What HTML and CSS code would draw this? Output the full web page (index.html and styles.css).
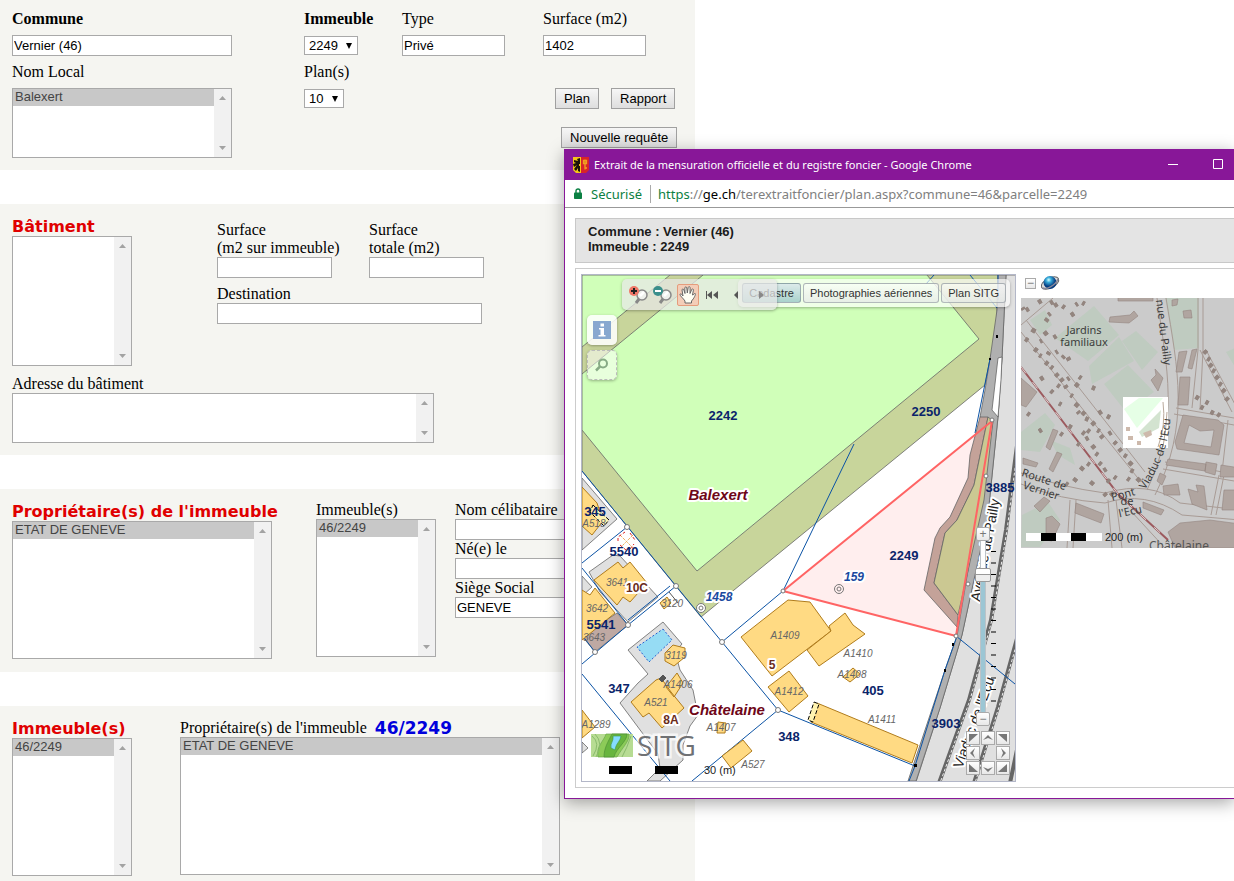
FILE: index.html
```html
<!DOCTYPE html>
<html lang="fr">
<head>
<meta charset="utf-8">
<title>Registre foncier</title>
<link rel="stylesheet" href="styles.css">
</head>
<body>
<svg class="defs" aria-hidden="true">
  <symbol id="scroll" viewBox="0 0 17 11"><path d="M5 8h7L8.500 4z" fill="#a3a3a3"/></symbol>
  <symbol id="caret" viewBox="0 0 8 8"><path d="M1 1h6L4 7z" fill="#000"/></symbol>
</svg>
<main class="form">
  <section class="panel panel-parcel">
    <div class="field">
      <label class="strong" for="commune">Commune</label>
      <input id="commune" type="text" value="Vernier (46)">
    </div>
    <div class="field">
      <label class="strong" for="immeuble">Immeuble</label>
      <span class="drop"><select id="immeuble"><option>2249</option></select><svg><use href="#caret"/></svg></span>
    </div>
    <div class="field">
      <label for="type">Type</label>
      <input id="type" class="w-small" type="text" value="Privé">
    </div>
    <div class="field">
      <label for="surface">Surface (m2)</label>
      <input id="surface" class="w-small" type="text" value="1402">
    </div>
    <div class="field">
      <label for="nomlocal">Nom Local</label>
      <span class="list list-short"><select id="nomlocal" multiple size="4"><option selected>Balexert</option></select><span class="bar"><svg><use href="#scroll"/></svg><svg class="down"><use href="#scroll"/></svg></span></span>
    </div>
    <div class="field">
      <label for="plans">Plan(s)</label>
      <span class="drop"><select id="plans"><option>10</option></select><svg><use href="#caret"/></svg></span>
    </div>
    <div class="actions">
      <div class="pair"><button type="button">Plan</button><button type="button">Rapport</button></div>
      <button type="button">Nouvelle requête</button>
    </div>
  </section>

  <section class="panel panel-building">
    <div class="building-top">
      <div class="titled w-list">
        <h2><label for="batiment">Bâtiment</label></h2>
        <span class="list list-medium"><select id="batiment" multiple size="7"></select><span class="bar"><svg><use href="#scroll"/></svg><svg class="down"><use href="#scroll"/></svg></span></span>
      </div>
      <div class="building-fields">
        <div class="stack"><label for="surfimm">Surface<br>(m2 sur immeuble)</label><input id="surfimm" type="text"></div>
        <div class="stack"><label for="surftot">Surface<br>totale (m2)</label><input id="surftot" type="text"></div>
        <div class="stack wide"><label for="destination">Destination</label><input id="destination" type="text"></div>
      </div>
    </div>
    <div class="stack address">
      <label for="adresse">Adresse du bâtiment</label>
      <span class="list list-address"><textarea id="adresse"></textarea><span class="bar"><svg><use href="#scroll"/></svg><svg class="down"><use href="#scroll"/></svg></span></span>
    </div>
  </section>

  <section class="panel panel-owner">
    <div class="titled">
      <h2><label for="proprio">Propriétaire(s) de l'immeuble</label></h2>
      <span class="list list-tall"><select id="proprio" multiple size="8"><option selected>ETAT DE GENEVE</option></select><span class="bar"><svg><use href="#scroll"/></svg><svg class="down"><use href="#scroll"/></svg></span></span>
    </div>
    <div class="stack w-list">
      <label for="imm2">Immeuble(s)</label>
      <span class="list list-tall"><select id="imm2" multiple size="8"><option selected>46/2249</option></select><span class="bar"><svg><use href="#scroll"/></svg><svg class="down"><use href="#scroll"/></svg></span></span>
    </div>
    <div class="stack">
      <label for="nom">Nom célibataire</label><input id="nom" type="text">
      <label for="ne">Né(e) le</label><input id="ne" type="text">
      <label for="siege">Siège Social</label><input id="siege" type="text" value="GENEVE">
    </div>
  </section>

  <section class="panel panel-estate">
    <div class="titled w-list">
      <h2><label for="imm3">Immeuble(s)</label></h2>
      <span class="list list-tall"><select id="imm3" multiple size="8"><option selected>46/2249</option></select><span class="bar"><svg><use href="#scroll"/></svg><svg class="down"><use href="#scroll"/></svg></span></span>
    </div>
    <div class="stack">
      <div class="legend"><label for="prop2">Propriétaire(s) de l'immeuble</label><strong>46/2249</strong></div>
      <span class="list list-tall"><select id="prop2" multiple size="8"><option selected>ETAT DE GENEVE</option></select><span class="bar"><svg><use href="#scroll"/></svg><svg class="down"><use href="#scroll"/></svg></span></span>
    </div>
  </section>
</main>

<aside class="window">
  <header class="titlebar">
    <svg class="crest" viewBox="0 0 16 16"><path fill="#f5c518" d="M0 0h8v16H3L0 13z"/><path fill="#d8232a" d="M8 0h8v13l-3 3H8z"/><path fill="#1b1408" d="M7 1 4 2 5 4 1 3v2l2 1-3 1 1 3 3-2-3 4 2 2 2-3v3l2 1V9H6V7h1z"/><path d="M12 2.500v10M10.500 3.500h3v3h-3zM12 11h2" fill="none" stroke="#f0a020" stroke-width="1.300"/></svg>
    <h1>Extrait de la mensuration officielle et du registre foncier - Google Chrome</h1>
    <button type="button" aria-label="Réduire"><svg viewBox="0 0 11 11"><path d="M0 5.500h10" stroke="#fff"/></svg></button>
    <button type="button" aria-label="Agrandir"><svg viewBox="0 0 11 11"><path d="M.5.500h9v9h-9z" fill="none" stroke="#fff"/></svg></button>
  </header>
  <div class="address-bar">
    <svg class="lock" viewBox="0 0 8 11"><path d="M2 5V3a2 2 0 0 1 4 0v2" fill="none" stroke="#0b8043" stroke-width="1.400"/><rect y="4.500" width="8" height="6.500" rx=".8" fill="#0b8043"/></svg>
    <span class="secure">Sécurisé</span>
    <span class="url"><span class="scheme">https</span>://<b>ge.ch</b>/terextraitfoncier/plan.aspx?commune=46&amp;parcelle=2249</span>
  </div>
  <div class="page">
    <p class="summary">Commune : Vernier (46)<br>Immeuble : 2249</p>
    <div class="viewer">
      <div class="map">
        <svg class="map-art" viewBox="582 275 433 506">
          <rect x="582" y="275" width="433" height="506" fill="#fff"/>
          <g stroke="#666" stroke-width=".8">
            <path fill="#c8d59b" d="M582 275H998L997 309 996 337 990 359 985 385 701 617 582 471z"/>
            <path fill="#d0ffb9" d="M582 275H927L979 339 697 571 582 430z"/>
            <path fill="#c8d59b" d="M670 275H703L582 374V347z"/>
            <path fill="#e0e0e0" d="M1006 275H1016V782H916L940 708 962 635 988 515 998 417 1002 358z"/>
            <path fill="#b0b0b0" d="M998 275H1006L1002 358 998 417 988 515 962 635 940 708 916 781H908L945 670 957 636 993 421 980 417 985 390 990 359 997 310z"/>
            <path fill="#fff" d="M998 358 1002 357 1001 380 998 417 992 410z"/>
            <path fill="#e0e0e0" d="M628 650 663 622 682 644 675 652 680 670 693 690 698 715 690 726 683 745V760L660 781H647L660 768 658 754 620 703 638 683 648 674zM589 572 613 555 620 556 658 597 628 622 600 592zM582 478 617 519 582 550zM582 742 588 748 582 753zM582 576 592 587 582 596z"/>
            <path fill="#bfa9a3" d="M617 613 628 625 595 652 582 636z"/>
          </g>
          <g fill="none" stroke="#666" stroke-width="4"><path d="M1018 438 1006 530 991 620 969 700 939 783M1018 635 998 707 974 783M1018 745 1010 783"/></g>
          <g fill="none" stroke="#eee" stroke-dasharray="3 2"><path d="M1019 438 1007 530 992 620 970 700 940 783M1019 635 999 707 975 783"/></g>
          <g fill="none" stroke="#0b53a5" stroke-width="1">
            <path d="M582 471 627 526 676 586 722 642 778 710 692 781M778 710 915 766M722 642 783 591 854 444M676 586 628 625 582 664M670 586 628 620M627 527 582 563M582 568 628 625M582 635 595 652M582 674 670 781M990 359 975 433M957 636 945 670 915 766 909 781M956 636 1015 684M970 275 997 308M998 275V300M934 275 926 284"/>
          </g>
          <g fill="#ffda83" stroke="#b07c1c">
            <path d="M741 637 788 600 810 602 831 631 772 676z"/>
            <path d="M845 613 853 625 865 634 819 666 807 650 831 631 829 626z"/>
            <path d="M789 671 808 696 789 712 768 687zM843 677 853 668 860 674 850 682zM817 703 918 745 912 763 811 722z"/>
            <path d="M743 740 752 751 731 768 722 756zM718 722 726 723 725 733 717 733z"/>
            <path d="M656 680 661 678 671 692 684 708 662 728 649 713 643 717 631 702zM677 673 683 683 674 697 666 687z"/>
            <path d="M665 653 673 645 685 648 685 657 674 666 665 661z"/>
            <path d="M630 562 647 583 630 602 623 597 617 605 594 580 618 562 623 568zM582 590 590 595 595 588 615 613 582 640z"/>
            <path d="M582 487 597 503 603 521 592 535 582 526zM582 710 595 727 582 738zM660 603 667 597 671 603 664 609z"/>
          </g>
          <path d="M593 505 609 520 604 526 590 512zM814 702 819 704 813 722 808 720z" fill="#fff3b0" stroke="#000" stroke-dasharray="4 2"/>
          <path d="M663 629 672 640 649 662 637 647z" fill="#96dcf4" stroke="#2860d0" stroke-dasharray="2 2"/>
          <path d="M620 535 634 549M633 535 620 548" stroke="#f0b060" stroke-dasharray="3 1"/>
          <path d="M618 541V537L625 532M630 533 635 540M620 545 626 550M630 549 634 544" fill="none" stroke="#d22" stroke-dasharray="3 2"/>
          <path d="M669 592 678 603M659 679 663 675 666 678 662 682z" stroke="#555" fill="#555"/>
          <path d="M992 421 783 591 956 636z" fill="#ff6060" fill-opacity=".11"/>
          <g stroke="#666" stroke-width=".8">
            <path fill="#c4a299" d="M980 417H988L977 470 974 485 957 520 945 533 934 583 958 615 957 627 924 590 935 538 940 528 950 517 968 478 970 455z"/>
            <path fill="#cbc892" d="M988 417 993 421 984 500 958 615 934 583 945 533 957 520 974 485z"/>
          </g>
          <path d="M992 421 783 591 956 636z" fill="none" stroke="#ff6464" stroke-width="2"/>
          <g fill="#fff" stroke="#777">
            <circle cx="627" cy="527" r="2.500"/><circle cx="676" cy="586" r="2.500"/><circle cx="628" cy="625" r="2.500"/><circle cx="595" cy="652" r="2.500"/><circle cx="722" cy="642" r="2.500"/><circle cx="778" cy="710" r="2.500"/><circle cx="783" cy="591" r="2"/><circle cx="992" cy="420" r="2"/><circle cx="986" cy="476" r="2"/><circle cx="968" cy="584" r="2"/><circle cx="956" cy="636" r="2"/>
            <circle cx="701" cy="608" r="4.500"/><circle cx="701" cy="608" r="2"/><circle cx="839" cy="589" r="4.500" fill="none"/><circle cx="839" cy="589" r="2" fill="none"/>
          </g>
          <path d="M996 335h2v3h-2zM989 358h2v2h-2zM944 669h2v3h-2zM952 643h2v3h-2zM914 764h3v3h-3z"/>
          <g class="street">
            <text transform="translate(980 602) rotate(-79)">Avenue du Pailly</text>
            <text transform="translate(962 769) rotate(-70)">Viaduc de l'Ecu</text>
          </g>
          <g class="building-no">
            <text x="785" y="639">A1409</text><text x="858" y="657">A1410</text><text x="852" y="678">A1408</text><text x="789" y="695">A1412</text><text x="882" y="723">A1411</text><text x="753" y="768">A527</text><text x="721" y="731">A1407</text><text x="656" y="706">A521</text><text x="678" y="688">A1406</text><text x="676" y="659">3119</text><text x="672" y="607">3120</text><text x="617" y="586">3641</text><text x="597" y="612">3642</text><text x="594" y="641">3643</text><text x="594" y="527">A518</text><text x="596" y="728">A1289</text>
          </g>
          <g class="parcel">
            <text x="723" y="420">2242</text><text x="926" y="416">2250</text><text x="904" y="560">2249</text><text x="1000" y="492">3885</text><text x="595" y="516">345</text><text x="624" y="556">5540</text><text x="601" y="629">5541</text><text x="619" y="693">347</text><text x="873" y="695">405</text><text x="789" y="741">348</text><text x="946" y="728">3903</text>
          </g>
          <g class="number"><text x="637" y="592">10C</text><text x="772" y="669">5</text><text x="671" y="724">8A</text></g>
          <g class="point"><text x="719" y="601">1458</text><text x="854" y="581">159</text></g>
          <g class="place"><text x="718" y="500">Balexert</text><text x="727" y="715">Châtelaine</text></g>
          <rect x="591" y="734" width="42" height="23" fill="#b7dc93"/>
          <path d="M598 757C596 746 604 741 606 734H629C630 741 622 748 617 757z" fill="#8ccb58" stroke="#6aa84a" stroke-width=".7"/>
          <path d="M604 757C604 748 608 742 612 734H627C627 742 616 748 614 757z" fill="#68b53f" stroke="#4f9137" stroke-width=".7"/>
          <path d="M613 736H621C620 742 616 743 615 750L611 748C610 743 614 741 613 736z" fill="#85dcff" stroke="#3a9648" stroke-width=".6"/>
          <path d="M592 736Q601 743 593 756M595 734Q604 743 596 757M631 736Q627 748 622 757" fill="none" stroke="#8abb6d"/>
          <text class="logo" x="637" y="756">SITG</text>
          <path d="M609 766h23v8h-23zM655 766h23v8h-23z"/>
          <text class="scale" x="704" y="774">30 (m)</text>
        </svg>
        <div class="layers"><button type="button" class="active">Cadastre</button><button type="button">Photographies aériennes</button><button type="button">Plan SITG</button></div>
        <div class="tools">
          <button type="button" aria-label="Zoom avant"><svg viewBox="0 0 22 22"><circle cx="14" cy="11" r="5" fill="#eef0ec" stroke="#888" stroke-width="1.500"/><path d="m11 15-3 4" stroke="#888" stroke-width="3"/><path d="M16 8l-4 4" stroke="#fff" stroke-width="2.500"/><circle cx="6" cy="7" r="5" fill="#ef7767"/><path d="M6 4v6M3 7h6" stroke="#222" stroke-width="2"/></svg></button>
          <button type="button" aria-label="Zoom arrière"><svg viewBox="0 0 22 22"><circle cx="14" cy="11" r="5" fill="#eef0ec" stroke="#888" stroke-width="1.500"/><path d="m11 15-3 4" stroke="#888" stroke-width="3"/><path d="M16 8l-4 4" stroke="#fff" stroke-width="2.500"/><circle cx="6" cy="7" r="5" fill="#3a8f8b"/><path d="M3 7h6" stroke="#fff" stroke-width="2"/></svg></button>
          <button type="button" class="active" aria-label="Déplacer"><svg viewBox="1 1 20 20"><path d="M8 17C6 14 3 12 3 10.500c0-1 1.500-1 3 1.500L5 6c0-1.300 1.500-1.300 1.900 0L8 9.500 7.800 4c0-1.400 1.900-1.400 2 0l.5 5L11.200 3.500c.3-1.300 2-1 1.900.2L13 9.500l1.700-4c.5-1.100 2-.5 1.700.6L15.500 11c1 .1 2-2 2.700-1.500.9.600-1.200 5-3.700 7.500v2H8z" fill="#fffff4" stroke="#666"/></svg></button>
          <button type="button" aria-label="Première vue"><svg viewBox="0 0 22 22"><path d="M5 7h1v8H5zM11 7v8l-5-4zM17 7v8l-5-4z" fill="#555"/></svg></button>
          <button type="button" aria-label="Vue précédente"><svg viewBox="0 0 22 22"><path d="M12 7v8l-4-4z" fill="#555"/></svg></button>
          <button type="button" aria-label="Vue suivante"><svg viewBox="0 0 22 22"><path d="M9 7v8l5-4z" fill="#888"/></svg></button>
        </div>
        <div class="side-tools">
          <button type="button" aria-label="Information"><svg viewBox="0 0 18 18"><path d="M0 0h18v18H0z" fill="#87a8cf"/><path d="M7.500 2.500h3.500v3H7.500zM6 7h5v7h1.500v1.500h-7V14h2V8.500H6z" fill="#fff"/></svg></button>
          <button type="button" class="dashed" aria-label="Rechercher"><svg viewBox="0 0 18 18"><circle cx="10" cy="7.500" r="4" fill="none" stroke="#87aa85" stroke-width="2"/><path d="m7 10.500-4 4" stroke="#87aa85" stroke-width="2.500"/></svg></button>
        </div>
        <div class="zoomer">
          <button type="button" aria-label="Agrandir la carte">+</button>
          <div class="rail">
            <input type="range" min="0" max="100" value="83" aria-label="Niveau de zoom">
            <svg class="ticks" viewBox="0 0 5 171"><path d="M2.500 10V162" stroke="#000" stroke-width="5" stroke-dasharray="1 10.500"/></svg>
          </div>
          <button type="button" aria-label="Réduire la carte">−</button>
        </div>
        <div class="pad">
          <button type="button" aria-label="Nord-ouest"><svg viewBox="1 1 12 12"><path d="M3 3h9L3 11z"/></svg></button>
          <button type="button" aria-label="Nord"><svg viewBox="1 1 12 12"><path d="m2 9 5-5 5 5-5-2z"/></svg></button>
          <button type="button" aria-label="Nord-est"><svg viewBox="1 1 12 12"><path d="M2 3h9v8z"/></svg></button>
          <button type="button" aria-label="Ouest"><svg viewBox="1 1 12 12"><path d="M9 2 4 7l5 5-2-5z"/></svg></button>
          <span></span>
          <button type="button" aria-label="Est"><svg viewBox="1 1 12 12"><path d="m5 2 5 5-5 5 2-5z"/></svg></button>
          <button type="button" aria-label="Sud-ouest"><svg viewBox="1 1 12 12"><path d="M3 3v8h9z"/></svg></button>
          <button type="button" aria-label="Sud"><svg viewBox="1 1 12 12"><path d="m2 6 5 5 5-5-5 2z"/></svg></button>
          <button type="button" aria-label="Sud-est"><svg viewBox="1 1 12 12"><path d="M11 3v8H2z"/></svg></button>
        </div>
      </div>
      <div class="overview">
        <div class="overview-head">
          <button type="button" aria-label="Replier">−</button>
          <svg class="planet" viewBox="0 0 20 16"><defs><radialGradient id="globe" cx=".4" cy=".3"><stop offset="0" stop-color="#d4ffff"/><stop offset=".4" stop-color="#37a9d8"/><stop offset="1" stop-color="#063c80"/></radialGradient></defs><ellipse cx="10" cy="8" rx="9.500" ry="5" transform="rotate(-28 10 8)" fill="#ddd" stroke="#666"/><circle cx="10" cy="7.500" r="6.500" fill="url(#globe)"/><path d="M2.500 13C6 15 15 11 18 4" fill="none" stroke="#889" stroke-width="1.500"/></svg>
        </div>
        <svg class="overview-art" viewBox="1021 298 213 250" preserveAspectRatio="xMinYMin slice">
          <rect x="1021" y="298" width="400" height="250" fill="#cbcbcb"/>
          <g fill="#bfcbc0">
            <path d="M1094 306 1119 335 1088 361 1055 338zM1122 341 1136 331 1158 352 1142 370zM1119 337 1134 361 1092 384 1089 366zM1104 384 1128 365 1154 392 1126 412zM1165 298H1199V348L1174 350zM1226 352 1240 346V375zM1021 432 1045 413 1055 425 1040 452 1021 450zM1022 515 1048 502 1060 520 1040 547H1021zM1050 440 1070 448 1075 465 1058 455zM1030 320 1045 310 1052 325 1040 335z"/>
          </g>
          <g fill="none" stroke="#a89b95">
            <path d="M1021 325 1053 298M1026 320 1145 472M1021 332 1141 482M1157 298C1167 370 1180 420 1147 490M1166 298C1178 370 1190 425 1155 495M1198 298V350L1192 408M1203 298V350L1200 410M1176 408 1234 418M1174 414 1234 425M1200 350 1232 412M1206 350 1238 410M1021 484Q1060 500 1105 503 1145 490 1182 515L1240 520M1021 473Q1060 487 1105 493 1150 480 1180 503L1240 510M1165 462 1240 475M1163 469 1240 482M1219 475 1211 515M1224 475 1216 515M1070 500 1067 548M1076 500 1073 548M1108 500 1112 548M1116 500 1122 548M1130 510 1165 548M1228 420 1222 472"/>
          </g>
          <path d="M1021 367 1054 410 1118 494 1168 540" fill="none" stroke="#9c5a5e" stroke-width="2"/>
          <path d="M1021 367 1054 410 1118 494 1168 540" fill="none" stroke="#ddd2d2" stroke-width="1" stroke-dasharray="8 11"/>
          <g transform="translate(1015 270) scale(.33333)" fill="none" stroke-linejoin="round">
            <path id="houses" stroke="#93857f" stroke-width="13" d="M33 121l8-5M22 113l4 6M70 98l9-6M106 100l8-5M92 154l6-8M100 135l6-5M118 108l9-6M142 108l7 5M168 136l9-6M182 105l6-4M202 98l7 4M50 178l11 7M87 194l10-8M75 215l6-3M116 203l8-5M98 254l5-8M122 248l6-4M142 264l6-6M158 262l5 9M31 206l8 6M58 236l9 7M73 255l6 4M91 276l8 7M107 290l7 5M122 311l7 8M137 326l7 8M150 346l5 8M157 328l6-4M181 341l9 8M76 328l9-6M107 362l7 6M127 345l7 5M180 401l10 8M201 426l9 8M188 424l5 6M211 445l9 4M231 456l8 9M247 480l7 4M251 430l9-6M276 438l9 5M192 320l7 5M231 352l9 4M217 480l7 6M257 496l7 8M281 492l8-5M297 515l7 7M312 536l7 8M327 555l8 5M342 576l9 9M347 600l8 5M167 375l6 4M161 468l9 5M136 490l7 5M202 486l7 6M212 508l8-5M187 520l7 5M231 526l8 9M242 550l7 5M252 578l7 6M266 602l8-5M197 600l8-9M217 580l7 5M177 634l7-9M152 640l7 5M227 644l8-9M277 630l7 6M297 620l7 5M287 668l7 8M366 634l9-9M337 625l7 5M267 670l7 7M72 484l8-5M37 430l7 5M132 400l7 4M567 242l8 8M577 265l8 5M583 282l8 8M592 300l8 5M602 318l8 8M612 340l8 5M622 358l8 8M632 383l8 8M542 380l9 6M572 395l8 5M557 410l8 5M587 425l9 5M607 432l8 5"/>
            <use href="#houses"/>
          </g>
          <g fill="#b0a5a0" stroke="#93857f" stroke-width=".6">
            <path d="M1110 317 1130 315 1134 311 1138 316 1129 323 1109 322zM1118 297H1153V301H1118zM1155 369 1163 378 1158 391 1151 380 1156 375zM1179 352 1187 351 1182 372 1176 372zM1192 350 1197 349 1192 369 1188 368zM1180 377H1190L1188 405H1178zM1021 378 1037 392 1026 407 1021 405zM1053 429 1058 431 1050 450 1046 447zM1057 452 1062 454 1053 472 1049 469zM1023 458 1038 463 1036 467 1023 464zM1034 506 1044 497 1050 501 1040 512zM1076 503 1104 514 1101 523 1075 513zM1046 518 1052 516 1060 524 1052 541 1046 540zM1143 502 1164 510 1161 515 1143 508zM1168 459 1206 464 1205 471 1166 465zM1206 462 1217 464 1215 475 1205 472zM1221 465 1240 468V477H1220zM1160 473 1166 476 1162 485 1157 481zM1163 486 1178 484 1180 495 1164 495zM1188 489 1198 492 1196 485 1204 486 1207 510 1192 504zM1224 490H1240V510H1222zM1210 520 1240 524V548H1175L1168 532 1180 523zM1172 300 1178 299 1177 305 1172 306zM1183 311 1191 310 1192 318 1184 318z"/>
            <path fill-rule="evenodd" d="M1183 415 1218 420 1224 425 1219 455 1177 449 1175 442zM1189 425 1184 443 1211 447 1214 430 1200 431z"/>
          </g>
          <path fill="#fff" d="M1123 397h45v51h-45z"/><path fill="#e6ffe6" d="M1124 409 1139 398H1163L1137 428z"/><path fill="#d3e3d0" d="M1139 432 1161 410 1159 428 1142 437z"/><path d="M1143 433 1151 430 1152 435 1146 438zM1128 436h5v4h-5zM1137 441h4v4h-4zM1126 427h4v4h-4z" fill="#cdb9ac"/><path d="M1163 402Q1166 425 1158 447M1167 412Q1166 430 1163 447" fill="none" stroke="#b9a99c"/>
          <path id="viaduct" d="M1145 490C1163 462 1171 440 1172 395" fill="none"/>
          <g class="overview-label">
            <text x="1084" y="334">Jardins</text><text x="1084" y="346">familiaux</text>
            <text class="start" transform="translate(1156 300) rotate(83)">nue du Pailly</text>
            <text class="start"><textPath href="#viaduct">Viaduc de l'Ecu</textPath></text>
            <text transform="translate(1124 498) rotate(-15)">Pont</text><text transform="translate(1127 505)">de</text><text transform="translate(1131 515) rotate(-12)">l'Ecu</text>
            <text transform="translate(1043 483) rotate(18)">Route de</text><text transform="translate(1040 494) rotate(18)">Vernier</text>
          </g>
          <text class="overview-place" x="1179" y="550">Châtelaine</text>
          <path fill="#fff" d="M1026 533h76v8h-76z"/><path d="M1041 533h15v8h-15zM1071 533h15v8h-15z"/>
          <text class="scale" x="1105" y="541">200 (m)</text>
        </svg>
      </div>
    </div>
  </div>
</aside>
</body>
</html>
```
FILE: styles.css
```css
* { box-sizing: border-box; }
body { margin: 0; background: #fff; color: #000; font: 16px/18px "Liberation Serif", serif; position: relative; min-height: 100vh; overflow-x: hidden; }
.defs { display: none; }
h1, h2, p { margin: 0; }
input, select, textarea, button { font: 13px/15px "Liberation Sans", sans-serif; color: #000; margin: 0; border-radius: 0; }

/* Form */
.form { width: 695px; max-width: 100%; min-height: 100vh; display: flex; flex-direction: column; gap: 34px; }
.panel { background: #f5f5f1; padding: 0 12px; }
.form input { width: 100%; height: 21px; padding: 1px; border: 1px solid #a9a9a9; background: #fff; }
.form input.w-small { width: 103px; }
.form button { height: 21px; padding: 0 8px; border: 1px solid #a0a0a0; background: linear-gradient(#f6f6f6, #dedede); white-space: nowrap; }
.strong { font-weight: bold; }
h2 { color: #e00000; font: bold 16px/18px "DejaVu Sans", sans-serif; white-space: nowrap; }
.w-list { width: 120px; }

.panel-parcel { display: grid; grid-template-columns: 292px 98px 141px 1fr; row-gap: 7px; padding-top: 10px; padding-bottom: 12px; }
.field { display: flex; flex-direction: column; align-items: flex-start; gap: 7px; }
.field #commune, .field .list { width: 220px; }
.drop { display: grid; align-items: center; justify-items: end; height: 21px; }
.drop select, .drop svg { grid-area: 1 / 1; }
.drop select { appearance: none; height: 19px; padding: 0 19px 0 4px; border: 1px solid #a9a9a9; background: #fff; }
.drop svg { width: 8px; height: 8px; margin-right: 5px; pointer-events: none; }
.actions { display: flex; flex-direction: column; align-items: flex-start; gap: 18px; padding-top: 25px; grid-column: 4; }
.actions > button { margin-left: 18px; }
.pair { display: flex; gap: 12px; padding-left: 12px; }

.list { display: flex; border: 1px solid #a9a9a9; background: #fff; }
.list select, .list textarea { flex: 1; min-width: 0; height: auto; border: 0; padding: 0; background: #fff; outline: 0; overflow: hidden; resize: none; appearance: none; }
.list option { height: 17px; min-height: 17px; padding: 0 2px; line-height: 16px; }
.list option:checked { background: #c8c8c8 linear-gradient(#c8c8c8, #c8c8c8); color: #444; }
.bar { width: 17px; flex: none; background: #f1f1f1; display: flex; flex-direction: column; justify-content: space-between; padding: 3px 0; }
.bar svg { width: 17px; height: 11px; }
.down { transform: rotate(180deg); }
.list-short { height: 70px; }
.list-medium { height: 130px; }
.list-address { height: 50px; }
.list-tall { height: 138px; }

.stack { display: flex; flex-direction: column; align-items: stretch; }
.titled { display: flex; flex-direction: column; }
.panel-building { padding-top: 14px; padding-bottom: 12px; }
.building-top { display: flex; gap: 85px; }
.building-fields { display: grid; grid-template-columns: 115px 115px; column-gap: 37px; row-gap: 7px; align-content: start; padding-top: 3px; white-space: nowrap; }
.wide { grid-column: 1 / 3; width: 265px; }
.address { width: 422px; padding-top: 9px; }

.panel-owner { display: grid; grid-template-columns: 304px 139px 1fr; align-items: start; padding-top: 12px; padding-bottom: 13px; }
.panel-owner .titled { width: 260px; padding-top: 2px; }
.panel-estate { display: grid; grid-template-columns: 120px 380px; column-gap: 48px; align-items: start; padding-top: 13px; padding-bottom: 5px; flex: 1; }
.panel-estate .titled { padding-top: 1px; }
.legend { display: flex; gap: 8px; }
.legend strong { color: #0000dc; font: bold 17px/18px "DejaVu Sans", sans-serif; }

/* Popup window */
.window { position: absolute; left: 564px; right: 0; top: 149px; background: #fff; border: solid #881798; border-width: 0 0 1px 1px; box-shadow: 0 4px 16px rgba(0, 0, 0, .35); }
.window button { padding: 0; }
.titlebar { height: 31px; background: #881798; display: flex; align-items: center; gap: 5px; padding-left: 8px; padding-right: 10px; }
.titlebar h1 { flex: 1; color: #fff; font: 11px/16px "Noto Sans", sans-serif; white-space: nowrap; }
.crest { width: 16px; height: 16px; }
.titlebar button { width: 11px; height: 11px; border: 0; background: none; margin-left: 29px; display: flex; }
.titlebar svg { flex: none; }
.titlebar button svg { width: 11px; height: 11px; }
.address-bar { height: 28px; border-bottom: 1px solid #999; display: flex; align-items: center; padding-left: 9px; font: 13px/18px "Noto Sans", sans-serif; white-space: nowrap; color: #808080; }
.lock { width: 8px; height: 11px; margin-right: 9px; }
.secure, .scheme { color: #0b8043; }
.secure { padding-right: 8px; border-right: 1px solid #aaa; margin-right: 7px; }
.url b { color: #000; font-weight: normal; }
.page { padding: 10px 0 10px 10px; display: flex; flex-direction: column; gap: 5px; }
.summary { border: 1px solid #c8c8c8; border-right: 0; background: #e4e4e4; padding: 5px 12px 8px; font: bold 13px/15px "Liberation Sans", sans-serif; color: #1a1a1a; }
.viewer { border: 1px solid #ccc; border-right: 0; padding: 5px 0 5px 5px; display: flex; gap: 5px; }
.map { position: relative; flex: none; border: 1px solid #b3b7c8; }
.map-art { display: block; width: 433px; height: 506px; }
.map-art text, .scale { font-family: "Liberation Sans", sans-serif; }
.parcel, .number, .point, .place, .building-no { text-anchor: middle; }
.parcel { font-size: 13px; font-weight: bold; fill: #0a246a; }
.number { font-size: 12px; font-weight: bold; fill: #6b2c1b; }
.point { font-size: 12px; font-weight: bold; font-style: italic; fill: #1b4aa0; }
.place { font-size: 15px; font-weight: bold; font-style: italic; fill: #6e0618; }
.building-no { font-size: 10px; font-style: italic; fill: #666; }
.street { font-size: 14px; fill: #222; }
.number text, .point text, .place text, .street text { paint-order: stroke; stroke: #fff; stroke-width: 4px; stroke-linejoin: round; }
.map-art .logo { font: 28px "Open Sans", sans-serif; fill: #6f7174; paint-order: stroke; stroke: rgba(255, 255, 255, .7); stroke-width: 5px; }
.scale { font-size: 11px; fill: #222; }

.layers, .tools { position: absolute; top: 4px; display: flex; align-items: center; border-radius: 5px; box-shadow: 0 1px 3px rgba(0, 0, 0, .3); }
.layers { right: 5px; gap: 2px; padding: 4px; background: rgba(255, 255, 255, .65); }
.layers button { height: 20px; padding: 0 6px; border: 1px solid rgba(120, 130, 140, .55); border-radius: 3px; background: linear-gradient(rgba(255, 255, 255, .5), rgba(228, 232, 230, .7)); font-size: 11px; color: #333; white-space: nowrap; }
.layers .active { background: linear-gradient(#dcebea, #a9d2cc); }
.tools { left: 40px; width: 155px; height: 31px; padding: 0 5px 0 6px; justify-content: space-between; background: rgba(232, 232, 232, .72); }
.tools button { width: 22px; height: 22px; border: 0; border-radius: 2px; background: none; }
.tools .active { background: #f3cdb8; border: 1px solid #e59c7c; }
.tools svg { display: block; width: 100%; height: 100%; }
.side-tools { position: absolute; left: 5px; top: 40px; display: flex; flex-direction: column; gap: 5px; }
.side-tools button { width: 30px; height: 30px; border: 0; border-radius: 5px; background: rgba(255, 255, 255, .85); box-shadow: 0 1px 3px rgba(0, 0, 0, .3); display: grid; place-items: center; }
.side-tools .dashed { border: 1px dashed #bbb; background: rgba(255, 255, 255, .5); }
.side-tools svg { width: 18px; height: 18px; }
.zoomer { position: absolute; left: 393px; top: 252px; width: 21px; display: flex; flex-direction: column; }
.zoomer button, .pad button, .overview-head button { width: 14px; height: 14px; border: 1px solid #aaa; background: linear-gradient(#fff, #e8e8e8); font-size: 12px; line-height: 11px; color: #777; }
.zoomer button { margin-left: 1px; border-radius: 2px; }
.rail { display: flex; height: 171px; }
.rail input { appearance: none; writing-mode: vertical-lr; direction: rtl; width: 16px; height: 171px; margin: 0; background: none; flex: none; }
.rail input::-webkit-slider-runnable-track { width: 6px; height: 171px; margin: 0 auto; border: solid #bcc3c8; border-width: 0 1px; background: linear-gradient(#fff 20%, #9cc6d4 20%); }
.rail input::-webkit-slider-thumb { appearance: none; width: 16px; height: 14px; margin-left: -6px; border: 1px solid #999; border-radius: 2px; background: linear-gradient(#fff 5px, #999 5px, #999 6px, #eee 6px); }
.ticks { width: 5px; height: 171px; }
.pad { position: absolute; left: 384px; top: 456px; display: grid; grid-template-columns: repeat(3, 14px); gap: 1px; }
.pad svg { display: block; width: 12px; height: 12px; fill: #777; }
.overview { flex: 1; min-width: 0; }
.overview-head { height: 24px; display: flex; align-items: center; gap: 4px; padding: 0 0 6px 4px; }
.overview-head button { width: 11px; height: 11px; line-height: 8px; }
.planet { width: 20px; height: 16px; }
.overview-art { display: block; width: 100%; height: 250px; }
.overview-art use { stroke: #b0a5a0; }
.overview-label { font: 11px "Noto Sans", sans-serif; fill: #3c3c3c; text-anchor: middle; }
.start { text-anchor: start; }
.overview-place { font: 12px "Noto Sans", sans-serif; fill: #555; text-anchor: middle; }
```
